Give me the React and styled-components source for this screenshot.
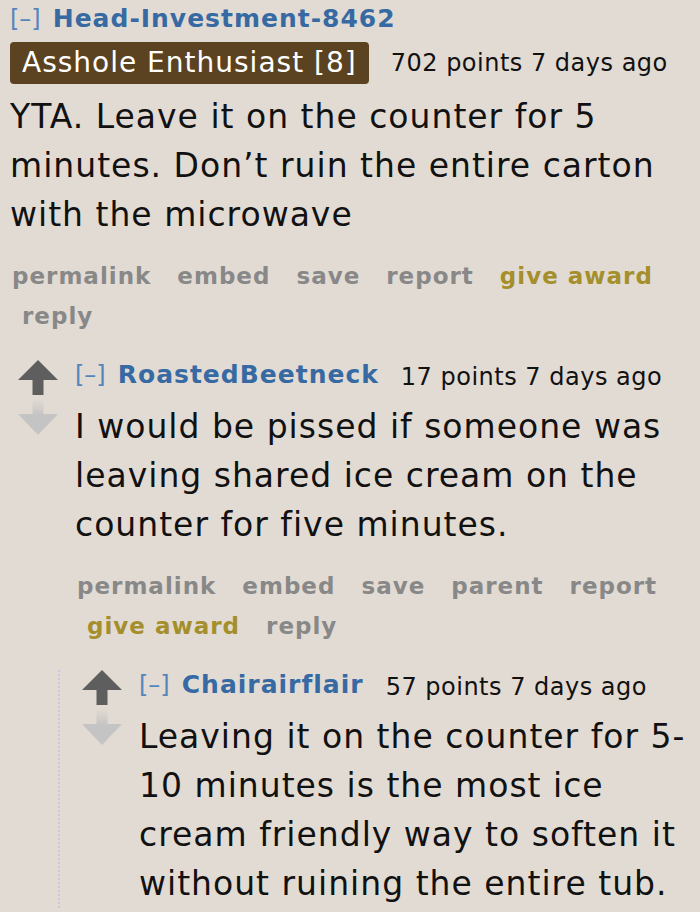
import React from "react";
import styled, { createGlobalStyle } from "styled-components";

const GlobalStyle = createGlobalStyle`
  html, body {
    margin: 0;
    padding: 0;
    background: #e2dbd3;
  }
  body {
    font-family: "DejaVu Sans", Verdana, sans-serif;
    color: #111;
  }
`;

const Page = styled.div`
  padding: 4px 8px 0 10px;
  overflow: hidden;
  height: 912px;
  box-sizing: border-box;
`;

const Thing = styled.div`
  display: flex;
  align-items: flex-start;
  gap: ${(p) => (p.$arrows ? "17px" : "0")};
`;

const Votes = styled.div`
  flex: 0 0 40px;
  display: flex;
  flex-direction: column;
  align-items: center;
  gap: 4px;
`;

const Entry = styled.div`
  flex: 1;
  min-width: 0;
`;

const Tagline = styled.div`
  display: flex;
  flex-wrap: wrap;
  align-items: center;
  column-gap: 22px;
  row-gap: 5px;
  line-height: 30px;
`;

const Who = styled.span`
  white-space: nowrap;
`;

const Expand = styled.span`
  font-size: 24px;
  color: #5585bd;
  margin-right: 12px;
`;

const Author = styled.span`
  font-size: 25px;
  font-weight: bold;
  color: #376aa3;
  letter-spacing: 1px;
`;

const Flair = styled.span`
  background: #5b4321;
  color: #fff;
  font-size: 28px;
  letter-spacing: 1px;
  line-height: 36px;
  padding: 3px 12px;
  border-radius: 4px;
  white-space: nowrap;
`;

const Meta = styled.span`
  font-size: 24px;
  letter-spacing: 0.5px;
  color: #111;
  white-space: nowrap;
`;

const Body = styled.div`
  font-size: 33px;
  letter-spacing: 1px;
  line-height: 49px;
  margin-top: ${(p) => (p.$flair ? "8px" : "9px")};
  padding-right: 2px;
`;

const Buttons = styled.ul`
  list-style: none;
  margin: 17px 0 0;
  padding: 0 0 0 2px;
  display: flex;
  flex-wrap: wrap;
  column-gap: 16px;
  line-height: 40px;
`;

const Button = styled.li`
  font-size: 23px;
  font-weight: bold;
  letter-spacing: 1px;
  color: ${(p) => (p.$gold ? "#a58f2d" : "#888")};
  padding-left: 10px;
  white-space: nowrap;
  &:first-child {
    padding-left: 0;
  }
`;

const Children = styled.div`
  margin-top: 24px;
  margin-left: ${(p) => p.$shift};
  padding-left: ${(p) => (p.$line ? "22px" : "0")};
  border-left: ${(p) => (p.$line ? "2px dotted #c4c8e4" : "none")};
`;

function Arrow({ down }) {
  if (down) {
    return (
      <svg width="40" height="36" viewBox="0 0 40 36">
        <defs>
          <linearGradient id="fade" x1="0" y1="0" x2="0" y2="1">
            <stop offset="0" stopColor="#c4c4c4" stopOpacity="0" />
            <stop offset="0.45" stopColor="#c4c4c4" stopOpacity="1" />
          </linearGradient>
        </defs>
        <path d="M14.5 0 H25.5 V15 H40 L20 36 L0 15 H14.5 Z" fill="url(#fade)" />
      </svg>
    );
  }
  return (
    <svg width="40" height="35" viewBox="0 0 40 35">
      <path d="M20 0 L40 20 H25.5 V35 H14.5 V20 H0 Z" fill="#5e5e5e" />
    </svg>
  );
}

const thread = {
  author: "Head-Investment-8462",
  flair: "Asshole Enthusiast [8]",
  points: 702,
  body: "YTA. Leave it on the counter for 5 minutes. Don’t ruin the entire carton with the microwave",
  buttons: ["permalink", "embed", "save", "report", "give award", "reply"],
  replies: [
    {
      author: "RoastedBeetneck",
      points: 17,
      body: "I would be pissed if someone was leaving shared ice cream on the counter for five minutes.",
      buttons: ["permalink", "embed", "save", "parent", "report", "give award", "reply"],
      replies: [
        {
          author: "Chairairflair",
          points: 57,
          body: "Leaving it on the counter for 5-10 minutes is the most ice cream friendly way to soften it without ruining the entire tub.",
          buttons: [],
          replies: [],
        },
      ],
    },
  ],
};

function Comment({ c, depth }) {
  const arrows = depth > 0;
  return (
    <>
      <Thing $arrows={arrows}>
        {arrows && (
          <Votes>
            <Arrow />
            <Arrow down />
          </Votes>
        )}
        <Entry>
          <Tagline>
            <Who>
              <Expand>[–]</Expand>
              <Author>{c.author}</Author>
            </Who>
            {c.flair && <Flair>{c.flair}</Flair>}
            <Meta>{c.points} points 7 days ago</Meta>
          </Tagline>
          <Body $flair={!!c.flair}>{c.body}</Body>
          {c.buttons.length > 0 && (
            <Buttons>
              {c.buttons.map((b) => (
                <Button key={b} $gold={b === "give award"}>
                  {b}
                </Button>
              ))}
            </Buttons>
          )}
        </Entry>
      </Thing>
      {c.replies.length > 0 && (
        <Children $shift={depth === 0 ? "8px" : "40px"} $line={depth > 0}>
          {c.replies.map((r) => (
            <Comment key={r.author} c={r} depth={depth + 1} />
          ))}
        </Children>
      )}
    </>
  );
}

export default function App() {
  return (
    <>
      <GlobalStyle />
      <Page>
        <Comment c={thread} depth={0} />
      </Page>
    </>
  );
}
